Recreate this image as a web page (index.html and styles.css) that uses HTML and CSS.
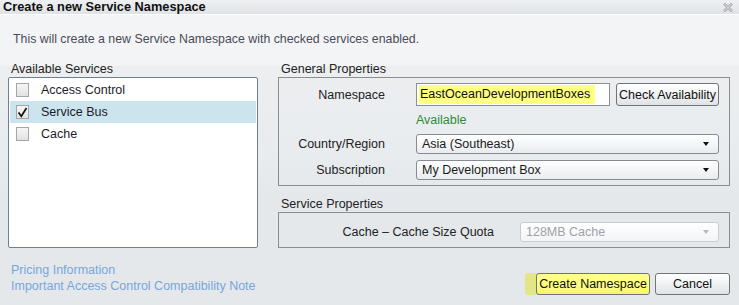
FILE: index.html
```html
<!DOCTYPE html>
<html lang="en">
<head>
    <meta charset="UTF-8">
    <meta name="viewport" content="width=device-width, initial-scale=1.0">
    <title>Create a new Service Namespace</title>
    <link rel="stylesheet" href="styles.css">
</head>
<body>
    <div class="dialog">
        <div class="titlebar">
            <span class="title">Create a new Service Namespace</span>
            <svg class="close" width="10" height="9" viewBox="0 0 10 9">
                <path d="M1 0.5 L9 8.5 M9 0.5 L1 8.5" stroke="#a4a7aa" stroke-width="2.6"/>
                <path d="M1 0.5 L9 8.5 M9 0.5 L1 8.5" stroke="#eef0f2" stroke-width="0.9"/>
            </svg>
        </div>

        <div class="content">
            <p class="intro">This will create a new Service Namespace with checked services enabled.</p>

            <div class="columns">
                <div class="services">
                    <div class="group-label">Available Services</div>
                    <ul class="service-list">
                        <li class="item"><span class="check"></span>Access Control</li>
                        <li class="item selected">
                            <span class="check">
                                <svg width="11" height="11" viewBox="0 0 11 11"><path d="M1.5 5.5 L4.3 9.2 L9.5 1" fill="none" stroke="#111" stroke-width="1.7"/></svg>
                            </span>Service Bus
                        </li>
                        <li class="item"><span class="check"></span>Cache</li>
                    </ul>
                </div>

                <div class="properties">
                    <div class="group-label">General Properties</div>
                    <div class="group-box general">
                        <div class="field-row first">
                            <label class="field-label" for="namespace">Namespace</label>
                            <div class="namespace-input" id="namespace"><span class="marked">EastOceanDevelopmentBoxes</span></div>
                            <button class="btn check-btn" type="button">Check Availability</button>
                        </div>
                        <div class="field-row status-row">
                            <span class="field-label"></span>
                            <span class="status">Available</span>
                        </div>
                        <div class="field-row">
                            <span class="field-label">Country/Region</span>
                            <div class="select">Asia (Southeast)<span class="arrow"></span></div>
                        </div>
                        <div class="field-row spaced">
                            <span class="field-label">Subscription</span>
                            <div class="select">My Development Box<span class="arrow"></span></div>
                        </div>
                    </div>

                    <div class="group-label second">Service Properties</div>
                    <div class="group-box service">
                        <div class="field-row">
                            <span class="field-label wide">Cache &ndash; Cache Size Quota</span>
                            <div class="select disabled">128MB Cache<span class="arrow"></span></div>
                        </div>
                    </div>
                </div>
            </div>

            <div class="footer">
                <div class="links">
                    <a href="#">Pricing Information</a>
                    <a href="#">Important Access Control Compatibility Note</a>
                </div>
                <div class="buttons">
                    <button class="btn primary" type="button">Create Namespace</button>
                    <button class="btn cancel" type="button">Cancel</button>
                </div>
            </div>
        </div>
    </div>
</body>
</html>
```

FILE: styles.css
```css
body {
    margin: 0;
    font-family: "Liberation Sans", Arial, sans-serif;
    font-size: 12.5px;
    color: #222;
    background: #e6e9ec;
}
.dialog {
    width: 739px;
    height: 305px;
    display: flex;
    flex-direction: column;
    overflow: hidden;
}
.titlebar {
    height: 14px;
    border-bottom: 1px solid #ffffff;
    background: linear-gradient(#eef0f2, #e0e3e6);
    display: flex;
    justify-content: space-between;
    align-items: center;
    padding: 0 6px 0 3px;
}
.title {
    font-size: 12.8px;
    font-weight: bold;
    line-height: 14px;
    color: #111;
}
.content {
    flex: 1;
    padding: 0 9px 0 8px;
    background: linear-gradient(#f3f4f6 0, #f3f4f6 50px, #eceef0 51px, #e9ecee 140px, #e5e8eb 186px, #e5e8eb 100%);
}
.intro {
    margin: 0;
    padding: 17px 0 0 5px;
    font-size: 12.35px;
    line-height: 14px;
    color: #4a4c58;
}
.columns {
    display: flex;
    gap: 20px;
    margin-top: 16px;
}
.services {
    width: 250px;
}
.properties {
    flex: 1;
}
.group-label {
    line-height: 14px;
    padding-left: 3px;
    margin-bottom: 1px;
    color: #222;
}
.group-label.second {
    margin-top: 11px;
}
.service-list {
    list-style: none;
    margin: 0;
    padding: 1px;
    height: 171px;
    box-sizing: border-box;
    background: #fff;
    border: 1px solid #6f7f8d;
    border-radius: 2px;
}
.item {
    height: 22px;
    display: flex;
    align-items: center;
    padding-left: 6px;
    color: #1c1c28;
}
.item.selected {
    background: #cce4ee;
}
.check {
    width: 11px;
    height: 12px;
    margin-right: 12px;
    border: 1px solid #a3a6aa;
    background: linear-gradient(#f6f6f6, #e2e2e2);
    display: flex;
    align-items: center;
    justify-content: center;
}
.group-box {
    border: 1px solid #8b8d90;
    box-sizing: border-box;
}
.general {
    padding: 5px 10px 5px 0;
    height: 109px;
}
.service {
    padding: 9px 10px 4px 0;
    height: 36px;
}
.field-row {
    display: flex;
    align-items: center;
    height: 20px;
}
.field-row.first {
    height: 23px;
}
.field-row.status-row {
    height: 28px;
}
.field-row.spaced {
    margin-top: 6px;
}
.field-label {
    width: 106px;
    margin-right: 31px;
    text-align: right;
    flex-shrink: 0;
}
.field-label.wide {
    width: 215px;
    margin-right: 26px;
}
.namespace-input {
    width: 194px;
    height: 23px;
    box-sizing: border-box;
    border: 1px solid #8a9097;
    background: #fff;
    padding: 1px 2px;
    margin-right: 6px;
    display: flex;
    flex-shrink: 0;
}
.marked {
    background: #ffff80;
    width: 175px;
    line-height: 19px;
    padding-left: 1px;
    color: #111;
    white-space: nowrap;
}
.status {
    color: #2e8b3c;
}
.select {
    flex: 1;
    height: 20px;
    box-sizing: border-box;
    border: 1px solid #868c93;
    border-radius: 3px;
    background: linear-gradient(#ffffff, #e9ecef);
    padding: 0 0 0 5px;
    line-height: 18px;
    display: flex;
    justify-content: space-between;
    align-items: center;
    color: #1a1a1a;
}
.select.disabled {
    border-color: #c9cdd2;
    color: #9ea2a6;
    background: linear-gradient(#ffffff, #f2f4f6);
}
.arrow {
    width: 0;
    height: 0;
    border-left: 3.5px solid transparent;
    border-right: 3.5px solid transparent;
    border-top: 4px solid #111;
    margin-right: 9px;
}
.disabled .arrow {
    border-top-color: #b5b9bd;
}
.btn {
    font-family: "Liberation Sans", Arial, sans-serif;
    font-size: 12.5px;
    color: #111;
    height: 22px;
    border: 1px solid #6f757b;
    border-radius: 3px;
    background: linear-gradient(#ffffff, #f2f3f4 45%, #dfe2e5);
    padding: 0;
    cursor: pointer;
    white-space: nowrap;
}
.check-btn {
    width: 103px;
    height: 23px;
    flex-shrink: 0;
}
.footer {
    display: flex;
    justify-content: space-between;
    align-items: flex-end;
    margin-top: 14px;
}
.links {
    display: flex;
    flex-direction: column;
    padding-left: 3px;
}
.links a {
    color: #78a6db;
    text-decoration: none;
    line-height: 16px;
}
.buttons {
    display: flex;
    gap: 5px;
    margin-bottom: -1px;
}
.primary {
    width: 114px;
    background: linear-gradient(#ffff90, #ffff80 50%, #f4f470);
    box-shadow: -11px 0 0 #e4e586;
}
.cancel {
    width: 75px;
}
```
